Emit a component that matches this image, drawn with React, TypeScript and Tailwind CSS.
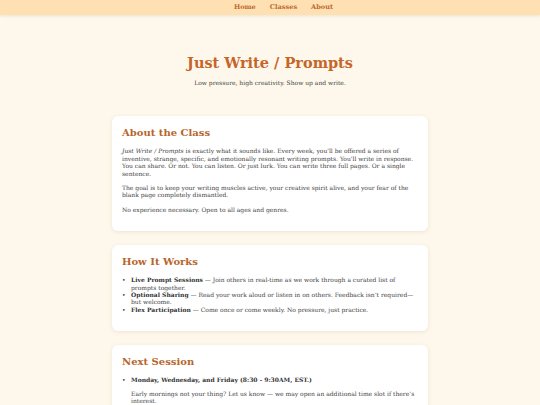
import React from "react";

const serif = { fontFamily: '"DejaVu Serif", Georgia, serif' };

function Card({ title, children }: { title: string; children: React.ReactNode }) {
  return (
    <section className="w-[316px] mx-auto bg-white rounded-[6px] shadow-[0_1px_4px_rgba(120,80,20,0.12)] px-[10px] pt-[10px] pb-[18px]">
      <h2 className="text-[10px] leading-[13px] font-bold text-[#b8652b] mb-[8px]">{title}</h2>
      {children}
    </section>
  );
}

function Item({ children }: { children: React.ReactNode }) {
  return (
    <li className="flex">
      <span className="w-[9px] shrink-0 text-[#333]">•</span>
      <div>{children}</div>
    </li>
  );
}

export default function App() {
  return (
    <div className="min-h-[405px] bg-[#fef8ec] text-[#444] text-[6px] leading-[7.4px]" style={serif}>
      <nav className="h-[15px] bg-[#ffe0b2] shadow-[0_1px_3px_rgba(150,100,30,0.15)] flex items-center justify-center gap-[14px] pl-[27px] text-[6.6px] font-bold text-[#c0692e]">
        <span>Home</span>
        <span>Classes</span>
        <span>About</span>
      </nav>
      <header className="text-center pt-[39px] pb-[30px]">
        <h1 className="text-[14.5px] leading-[18px] font-bold text-[#c5652a]">Just Write / Prompts</h1>
        <p className="mt-[7px]">Low pressure, high creativity. Show up and write.</p>
      </header>
      <main className="flex flex-col gap-[14px]">
        <Card title="About the Class">
          <p className="mb-[7px]">
            <em>Just Write / Prompts</em> is exactly what it sounds like. Every week, you'll be offered a series of inventive, strange, specific, and emotionally resonant writing prompts. You'll write in response. You can share. Or not. You can listen. Or just lurk. You can write three full pages. Or a single sentence.
          </p>
          <p className="mb-[7px]">
            The goal is to keep your writing muscles active, your creative spirit alive, and your fear of the blank page completely dismantled.
          </p>
          <p>No experience necessary. Open to all ages and genres.</p>
        </Card>
        <Card title="How It Works">
          <ul>
            <Item><strong className="text-[#333]">Live Prompt Sessions</strong> — Join others in real-time as we work through a curated list of prompts together.</Item>
            <Item><strong className="text-[#333]">Optional Sharing</strong> — Read your work aloud or listen in on others. Feedback isn’t required—but welcome.</Item>
            <Item><strong className="text-[#333]">Flex Participation</strong> — Come once or come weekly. No pressure, just practice.</Item>
          </ul>
        </Card>
        <Card title="Next Session">
          <ul>
            <Item>
              <strong className="text-[#333]">Monday, Wednesday, and Friday (8:30 - 9:30AM, EST.)</strong>
              <p className="mt-[6px]">Early mornings not your thing? Let us know — we may open an additional time slot if there’s interest.</p>
            </Item>
          </ul>
        </Card>
      </main>
    </div>
  );
}
